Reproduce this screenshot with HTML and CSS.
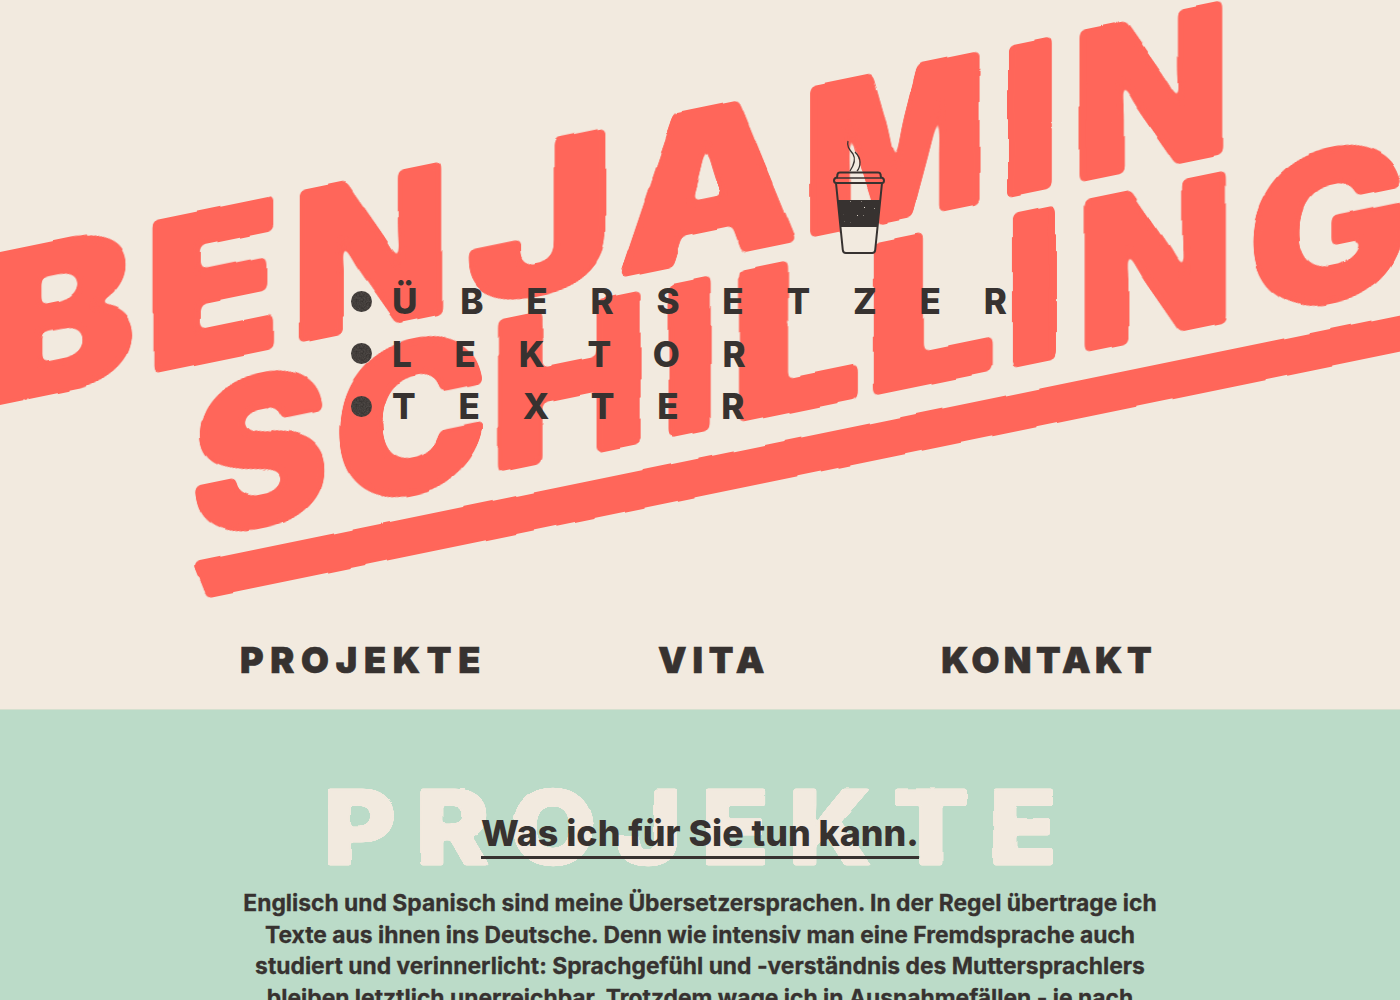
FILE: index.html
```html
<!DOCTYPE html>
<html lang="de">
<head>
<meta charset="utf-8">
<title>Benjamin Schilling</title>
<link rel="stylesheet" href="styles.css">
</head>
<body>
<svg class="defs" width="0" height="0" aria-hidden="true">
  <filter id="rough" x="-2%" y="-10%" width="104%" height="120%" color-interpolation-filters="sRGB">
    <feGaussianBlur in="SourceGraphic" stdDeviation="3" result="soft"/>
    <feComponentTransfer in="soft" result="round">
      <feFuncA type="linear" slope="12" intercept="-5.500"/>
    </feComponentTransfer>
    <feTurbulence type="fractalNoise" baseFrequency="0.022" numOctaves="1" seed="4" result="noise"/>
    <feDisplacementMap in="round" in2="noise" scale="5" xChannelSelector="R" yChannelSelector="G"/>
  </filter>
  <filter id="rough-small" x="-2%" y="-10%" width="104%" height="120%" color-interpolation-filters="sRGB">
    <feGaussianBlur in="SourceGraphic" stdDeviation="1" result="soft"/>
    <feComponentTransfer in="soft" result="round">
      <feFuncA type="linear" slope="10" intercept="-4.500"/>
    </feComponentTransfer>
    <feTurbulence type="fractalNoise" baseFrequency="0.05" numOctaves="1" seed="9" result="noise"/>
    <feDisplacementMap in="round" in2="noise" scale="2.500" xChannelSelector="R" yChannelSelector="G"/>
  </filter>
  <filter id="grain" x="0" y="0" width="100%" height="100%" color-interpolation-filters="sRGB">
    <feTurbulence type="fractalNoise" baseFrequency="0.7" numOctaves="2" seed="11"/>
    <feColorMatrix values="0 0 0 0 0.95  0 0 0 0 0.92  0 0 0 0 0.87  0 0 0 7 -5.300"/>
    <feComposite in2="SourceGraphic" operator="in" result="specks"/>
    <feMerge><feMergeNode in="SourceGraphic"/><feMergeNode in="specks"/></feMerge>
  </filter>
  <filter id="soft-grain" x="0" y="0" width="100%" height="100%" color-interpolation-filters="sRGB">
    <feTurbulence type="fractalNoise" baseFrequency="0.6" numOctaves="2" seed="3"/>
    <feColorMatrix values="0 0 0 0 0.95  0 0 0 0 0.92  0 0 0 0 0.87  0 0 0 .22 -.04"/>
    <feComposite in2="SourceGraphic" operator="in" result="specks"/>
    <feMerge><feMergeNode in="SourceGraphic"/><feMergeNode in="specks"/></feMerge>
  </filter>
</svg>
<header class="hero">
  <div class="stage">
    <h1 class="title">
      <span class="line line-first"><span class="g a1">B</span><span class="g a2">E</span><span class="g a3">N</span><span class="g a4">J</span><span class="g a5">A</span><span class="g a6">M</span><span class="g a7">I</span><span class="g a8">N</span></span>
      <span class="line line-second"><span class="g b1">S</span><span class="g b2">C</span><span class="g b3">H</span><span class="g b4">I</span><span class="g b5">L</span><span class="g b6">L</span><span class="g b7">I</span><span class="g b8">N</span><span class="g b9">G</span></span>
      <span class="rule"></span>
    </h1>
    <div class="overlay">
      <svg class="cup" viewBox="0 0 52 116" width="52" height="116" aria-hidden="true">
        <path d="M15 1c-1.500 6 2 9 5 13 3 5 1 11-3 17M22 12c3 3 5 6 5 10s-1 7-3 9" fill="none" stroke="#373230" stroke-width="1.300"/>
        <path d="M7.500 87h37l-2.500 25H10z" fill="#f2eadf"/>
        <path d="M4.700 60h42.600l-3 27H7.500z" fill="#373230" filter="url(#grain)"/>
        <path d="M3 43l6.800 67q.3 3 3 3h26.400q2.700 0 3-3L49 43" fill="none" stroke="#373230" stroke-width="2"/>
        <path d="M3 43q-2-.2-2-2.500 0-2.500 3-3l.5-3q.2-2 2.500-2h38q2.300 0 2.500 2l.5 3q3 .5 3 3t-2 2.500z" fill="none" stroke="#373230" stroke-width="2"/>
        <path d="M4 38h44" stroke="#373230" stroke-width="1.500"/>
      </svg>
      <ul class="roles">
        <li>Übersetzer</li>
        <li>Lektor</li>
        <li>Texter</li>
      </ul>
    </div>
  </div>
  <nav class="nav">
    <a class="nav-projects" href="#projekte">Projekte</a>
    <a class="nav-vita" href="#vita">Vita</a>
    <a class="nav-contact" href="#kontakt">Kontakt</a>
  </nav>
</header>
<section class="projects" id="projekte">
  <div class="heading-stack">
    <div class="ghost">Projekte</div>
    <h2 class="subhead"><span>Was ich für Sie tun kann.</span></h2>
  </div>
  <p class="copy">Englisch und Spanisch sind meine Übersetzersprachen. In der Regel übertrage ich<br>Texte aus ihnen ins Deutsche. Denn wie intensiv man eine Fremdsprache auch<br>studiert und verinnerlicht: Sprachgefühl und -verständnis des Muttersprachlers<br>bleiben letztlich unerreichbar. Trotzdem wage ich in Ausnahmefällen - je nach</p>
</section>
</body>
</html>
```
FILE: styles.css
```css
html, body {
  margin: 0;
  height: 100%;
  overflow: hidden;
}
body {
  background: #f2eadf;
  color: #373230;
  font-family: Inter, "Liberation Sans", sans-serif;
}
.defs { display: block; height: 0; }
.hero {
  height: 709px;
  display: flex;
  flex-direction: column;
  overflow: hidden;
}
.stage {
  display: grid;
  height: 620px;
  flex: none;
}
.title {
  grid-area: 1 / 1;
  margin: 0;
  width: 1500px;
  height: 420px;
  color: #ff665a;
  font-weight: 900;
  font-size: 208px;
  line-height: 168px;
  -webkit-text-stroke: 2px #ff665a;
  transform-origin: 0 0;
  transform: translateY(244px) skewY(-11.6deg);
  filter: url(#rough);
}
.line { display: block; white-space: nowrap; }
.line-first { margin-left: -15px; }
.line-second { margin-left: 191px; padding-top: 2px; height: 166px; }
.g {
  display: inline-block;
  transform-origin: 0 0;
}
/* Hand-set lettering: every glyph of the wordmark has its own width and stretch */
.a1 { width: 159px; transform: scaleX(1.09); }
.a2 { width: 147px; transform: scaleX(1.08); }
.a3 { width: 174px; }
.a4 { width: 150px; transform: scaleX(1.22); }
.a5 { width: 187px; transform: scaleX(1.12); }
.a6 { width: 197px; transform: scaleX(.935); }
.a7 { width: 72px; transform: scaleX(1.02); }
.a8 { width: 174px; }
.b1 { width: 142px; transform: translateY(6px); }
.b2 { width: 156px; transform: translateY(3px); }
.b3 { width: 171px; transform: scaleX(1.03); }
.b4 { width: 69px; transform: scaleX(.98); }
.b5 { width: 135px; transform: scaleX(1.14); }
.b6 { width: 140px; transform: scaleX(1.14); }
.b7 { width: 72px; }
.b8 { width: 171px; transform: scaleX(.99); }
.b9 { width: 200px; transform: scaleX(1.04); }
.rule {
  display: block;
  height: 38px;
  width: 1300px;
  margin-left: 193px;
  margin-top: 22px;
  background: #ff665a;
  clip-path: polygon(0 0, 100% 0, 100% 100%, 14px 100%);
}
.overlay {
  grid-area: 1 / 1;
  z-index: 1;
  padding-left: 351px;
}
.cup {
  display: block;
  margin: 140px 0 0 482px;
}
.roles {
  list-style: none;
  margin: 19px 0 0;
  padding: 0;
  font-size: 35px;
  font-weight: 800;
  line-height: 52.500px;
  letter-spacing: 42.800px;
  text-transform: uppercase;
}
.roles li {
  display: flex;
  align-items: center;
  gap: 20px;
}
.roles li::before {
  content: "";
  width: 21px;
  height: 21px;
  border-radius: 50%;
  background: #373230;
  filter: url(#soft-grain);
}
.nav {
  display: flex;
  justify-content: center;
  gap: 171px;
  padding: 18px 4px 0 0;
  font-size: 36px;
  font-weight: 900;
  line-height: 44px;
  text-transform: uppercase;
  -webkit-text-stroke: .6px #373230;
}
.nav a { color: inherit; text-decoration: none; }
.nav-projects { letter-spacing: 6.750px; }
.nav-vita { letter-spacing: 5.750px; }
.nav-contact { letter-spacing: 4.500px; }
.projects {
  background: #bbdbc8;
  height: 291px;
  overflow: hidden;
  text-align: center;
  border-top: 1px solid #d5e0cf;
  box-sizing: border-box;
}
.heading-stack {
  display: grid;
  justify-items: center;
  padding-top: 57px;
}
.ghost {
  grid-area: 1 / 1;
  font-size: 104px;
  font-weight: 900;
  line-height: 120px;
  letter-spacing: 18.200px;
  color: #f2eadf;
  text-transform: uppercase;
  -webkit-text-stroke: 1px #f2eadf;
  transform: scaleX(1.07);
  filter: url(#rough-small);
}
.subhead {
  grid-area: 1 / 1;
  z-index: 1;
  margin: 0;
  padding-top: 43px;
  font-size: 35.800px;
  font-weight: 800;
  line-height: 46px;
}
.subhead span {
  display: inline-block;
  border-bottom: 3px solid #373230;
}
.copy {
  margin: 1px 0 0;
  font-size: 22.850px;
  font-weight: 700;
  line-height: 31.500px;
  -webkit-text-stroke: .3px #373230;
}
```
